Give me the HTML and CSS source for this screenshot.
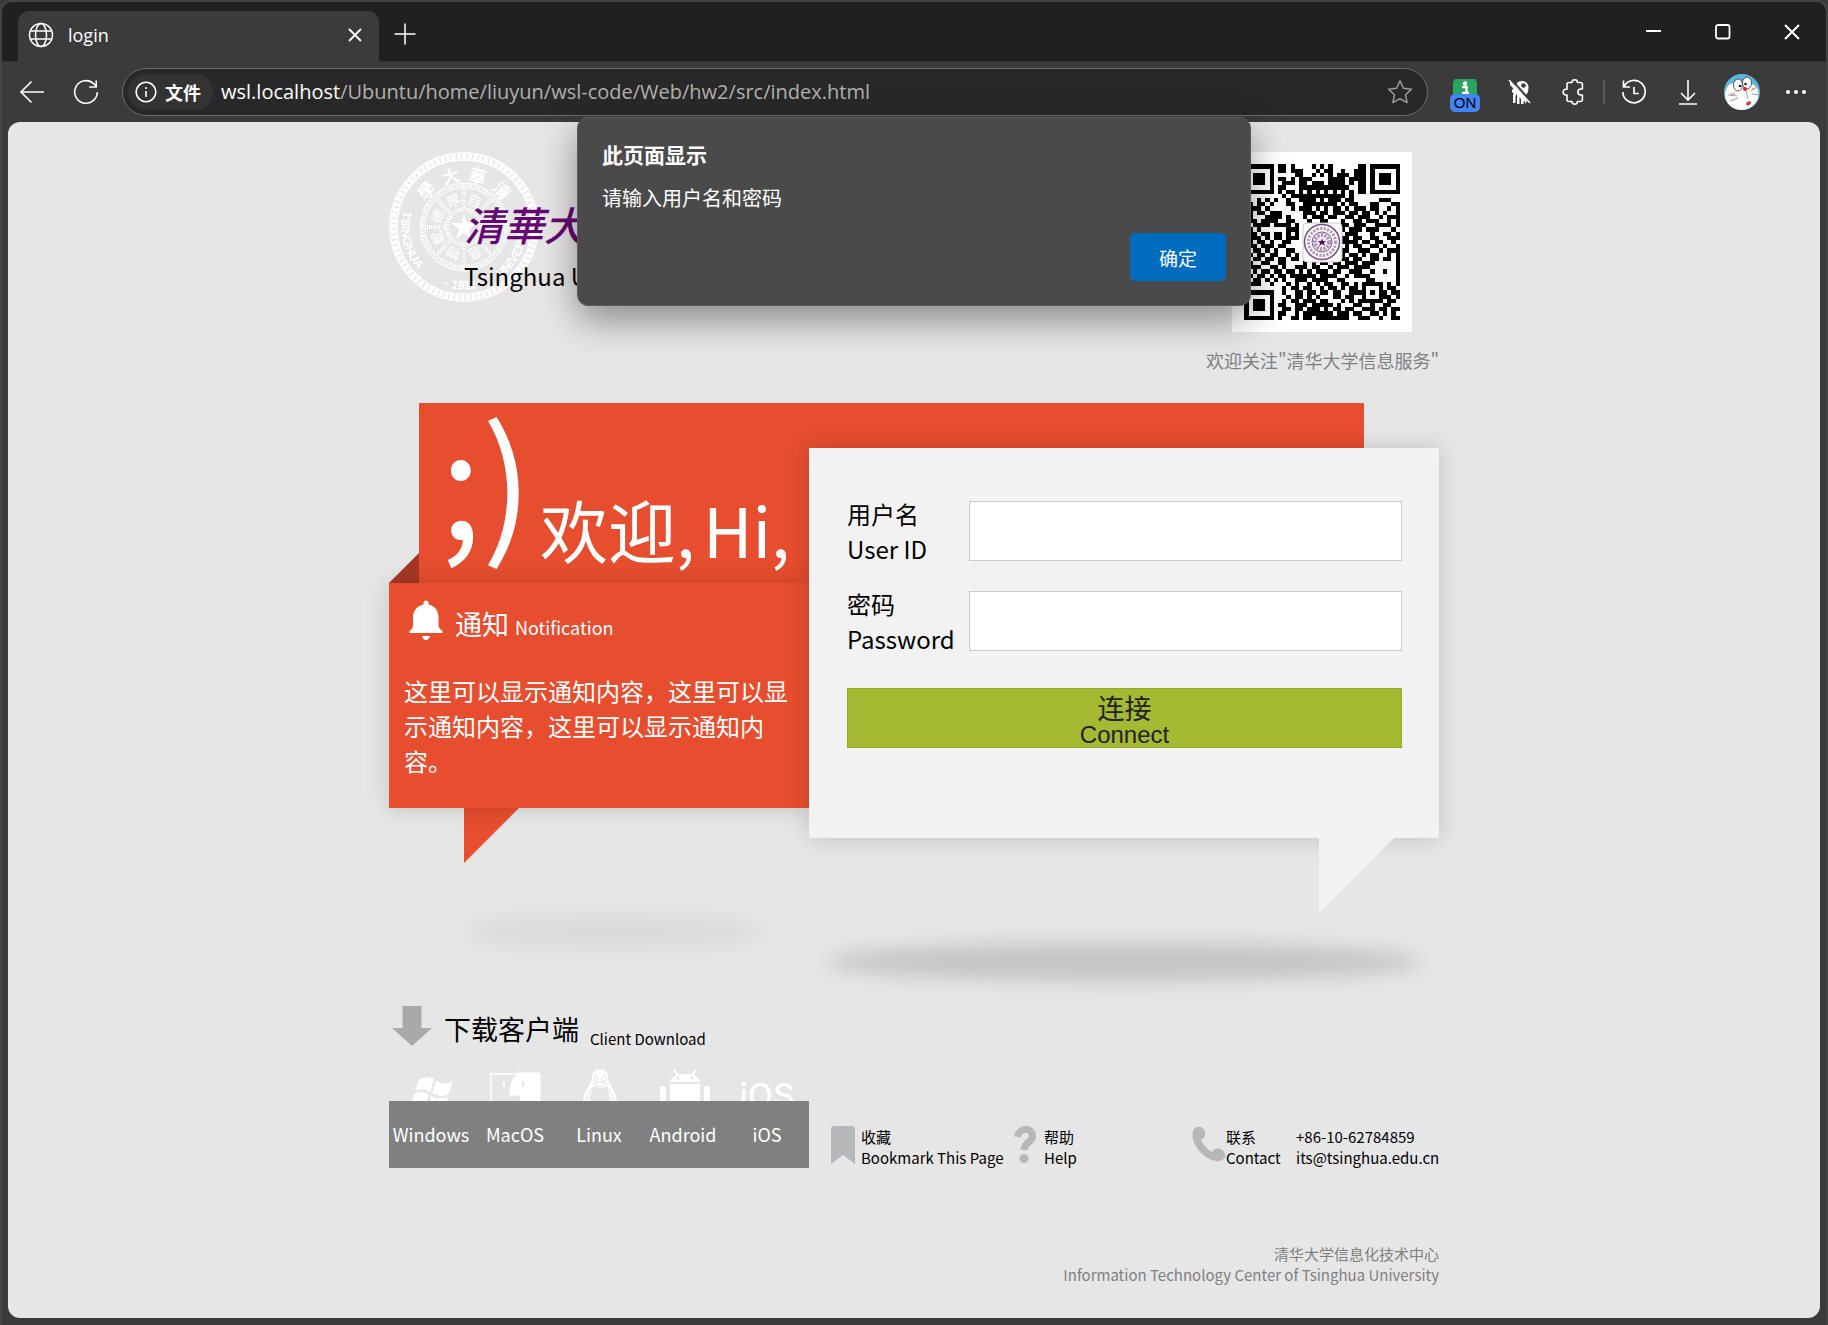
FILE: index.html
```html
<!DOCTYPE html>
<html lang="zh-CN">
<head>
<meta charset="utf-8">
<title>login</title>
<link rel="stylesheet" href="styles.css">
</head>
<body>
<div class="window">
  <header class="titlebar">
    <div class="tab">
      <svg class="tab-icon" width="26" height="26" viewBox="0 0 26 26"><g fill="none" stroke="#fff" stroke-width="1.5"><circle cx="13" cy="13" r="11.5"/><ellipse cx="13" cy="13" rx="5.5" ry="11.5"/><path d="M2.5 9h21M2.5 17h21"/></g></svg>
      <span class="tab-title">login</span>
      <button class="plain" aria-label="关闭标签页"><svg width="14" height="14" viewBox="0 0 14 14"><path d="M1 1l12 12M13 1L1 13" stroke="#fff" stroke-width="1.8" fill="none"/></svg></button>
    </div>
    <button class="plain new-tab" aria-label="新建标签页"><svg width="22" height="22" viewBox="0 0 22 22"><path d="M11 .5v21M.5 11h21" stroke="#fff" stroke-width="1.5" fill="none"/></svg></button>
    <div class="window-buttons">
      <button class="plain" aria-label="最小化"><svg width="16" height="16" viewBox="0 0 16 16"><path d="M0 7h15" stroke="#fff" stroke-width="2"/></svg></button>
      <button class="plain" aria-label="最大化"><svg width="16" height="16" viewBox="0 0 16 16"><rect x="1" y="1" width="13.5" height="13.5" rx="2" stroke="#fff" stroke-width="1.8" fill="none"/></svg></button>
      <button class="plain" aria-label="关闭"><svg width="16" height="16" viewBox="0 0 16 16"><path d="M1 1l14 14M15 1L1 15" stroke="#fff" stroke-width="2" fill="none"/></svg></button>
    </div>
  </header>

  <div class="toolbar">
    <button class="tool" aria-label="返回"><svg width="26" height="24" viewBox="0 0 26 24"><path d="M25 12H2M12.500 1.500L2 12l10.500 10.500" stroke="#fff" stroke-width="1.600" fill="none"/></svg></button>
    <button class="tool" aria-label="刷新"><svg width="26" height="26" viewBox="0 0 26 26"><path d="M24.300 13A11.300 11.300 0 1 1 20.800 4.800L23 7M23.200 1.500V8h-7" stroke="#fff" stroke-width="1.600" fill="none"/></svg></button>
    <div class="address">
      <span class="chip"><svg width="22" height="22" viewBox="0 0 22 22"><circle cx="11" cy="11" r="9.800" fill="none" stroke="#fff" stroke-width="1.600"/><path d="M11 10v6" stroke="#fff" stroke-width="1.600"/><circle cx="11" cy="7" r="1.100" fill="#fff"/></svg>文件</span>
      <span class="url"><b>wsl.localhost</b>/Ubuntu/home/liuyun/wsl-code/Web/hw2/src/index.html</span>
      <button class="plain" aria-label="收藏此页"><svg width="26" height="26" viewBox="0 0 26 26"><path d="M13 1.800l3.400 7.400 8 1-5.900 5.500 1.600 8L13 19.700l-7.100 4 1.600-8L1.600 10.200l8-1z" stroke="#a0a0a0" stroke-width="1.400" fill="none" stroke-linejoin="round"/></svg></button>
    </div>
    <button class="tool tool-on" aria-label="扩展"><svg width="30" height="34" viewBox="0 0 30 34"><path d="M5 0h20l2 3v12H3V3z" fill="#29a562"/><circle cx="15" cy="4.500" r="2.200" fill="#fff"/><path d="M12 8h4.500v6M12 14h7" stroke="#fff" stroke-width="2.500" fill="none"/><rect y="15" width="30" height="18" rx="5" fill="#4285f4"/><text x="15" y="29" text-anchor="middle" class="badge">ON</text></svg></button>
    <button class="tool" aria-label="扩展二"><svg width="24" height="24" viewBox="0 0 24 24"><path d="M2 1l5 5v4L2 5zM4 9l4 4v3L4 12zM5 14v9h2.500v-8zM9 15v9h2.500v-9zM13 17v7h2.500v-6zM17 19v5l2-3zM9 3c3-3 11-3 11.500 4 0 4-1 7-3 8L8 6z" fill="#fff"/><path d="M6 5l12 14-2 3L5 11z" fill="#fff"/><circle cx="15.500" cy="5.500" r="2.300" fill="#3b3b3b"/><path d="M4 0l19 21" stroke="#3b3b3b" stroke-width="1.500"/><path d="M1 0l21 23" stroke="#fff" stroke-width="1.500"/></svg></button>
    <button class="tool" aria-label="扩展中心"><svg width="24" height="26" viewBox="0 0 24 26"><path d="M7 3.500h3a2.700 2.700 0 0 1 5.400 0h3a2 2 0 0 1 2 2V10h-1.500a3 3 0 0 0 0 6h1.500v4.500a2 2 0 0 1-2 2h-3a2.700 2.700 0 0 1-5.400 0H7a2 2 0 0 1-2-2V16H4a2.900 2.900 0 0 1 0-5.800h1V5.500a2 2 0 0 1 2-2z" stroke="#fff" stroke-width="1.600" fill="none" stroke-linejoin="round"/></svg></button>
    <span class="divider"></span>
    <button class="tool" aria-label="历史记录"><svg width="26" height="26" viewBox="0 0 26 26"><path d="M2.500 1.500V8H9M3 7.500A11.200 11.200 0 1 1 1.800 13M13 8v6.500h5" stroke="#fff" stroke-width="1.700" fill="none"/></svg></button>
    <button class="tool" aria-label="下载"><svg width="20" height="26" viewBox="0 0 20 26"><path d="M10 1v20M3 14l7 7 7-7M1 25h18" stroke="#fff" stroke-width="1.600" fill="none"/></svg></button>
    <button class="tool" aria-label="个人资料"><svg width="36" height="36" viewBox="0 0 36 36"><circle cx="18" cy="18" r="18" fill="#5ab8e0"/><path d="M4 12c6-6 22-7 29 2 5 10-3 22-15 22C5 36-4 24 4 12z" fill="#fff"/><g stroke="#333" stroke-width=".8" fill="#fff"><ellipse cx="14" cy="11" rx="4.500" ry="6"/><ellipse cx="23" cy="9" rx="4.500" ry="6"/></g><circle cx="16" cy="12" r="1.300" fill="#222"/><circle cx="21.500" cy="10" r="1.300" fill="#222"/><circle cx="21" cy="15" r="2" fill="#d22"/><path d="M22 17l2 8M4 21l9 1M6 27l8-3M27 17l6-4M28 20l7 1" stroke="#777" stroke-width=".7"/><path d="M22 30c1-4 6-3 5-1s-4 4-5 1z" fill="#d33"/><path d="M6 20h5M28 15l4-1" stroke="#f69a9a" stroke-width="1.500"/></svg></button>
    <button class="tool" aria-label="更多"><svg width="20" height="4" viewBox="0 0 20 4"><g fill="#fff"><circle cx="2" cy="2" r="2"/><circle cx="10" cy="2" r="2"/><circle cx="18" cy="2" r="2"/></g></svg></button>
  </div>

  <div class="page">
    <main class="content">
      <div class="masthead">
        <div class="brand">
          <svg class="seal" width="150" height="150" viewBox="0 0 150 150">
            <defs>
              <path id="arc-low" d="M15 57A62.600 62.600 0 1 0 135 57"/>
            </defs>
            <g fill="none" stroke="#fff">
              <circle cx="75" cy="75" r="74" stroke-width="1.300"/>
              <circle cx="75" cy="75" r="67" stroke-width="1.300"/>
              <circle cx="75" cy="75" r="70.500" stroke-width="6" stroke-dasharray="4.200 1.300"/>
              <circle cx="75" cy="75" r="44" stroke-width="1"/>
              <circle cx="75" cy="75" r="41.500" stroke-width="3" stroke-dasharray="1.500 1.300"/>
              <circle cx="75" cy="75" r="39" stroke-width="1"/>
              <circle cx="75" cy="75" r="19" stroke-width="1"/>
              <circle cx="75" cy="75" r="16.500" stroke-width="3" stroke-dasharray="1.500 1.300"/>
              <path d="M75 36v20M75 94v20M36 75h20M94 75h20M47.400 47.400l14 14M88.500 88.500l14 14M102.600 47.400l-14 14M61.500 88.500l-14 14" stroke-width="4" stroke-dasharray="1 1"/>
            </g>
            <path d="M75 62l3 9h10l-8 6 3 10-8-6-8 6 3-10-8-6h10z" fill="#fff"/>
            <g class="seal-cjk" text-anchor="middle">
              <g transform="rotate(-46 75 75)"><text x="75" y="29">學</text></g>
              <g transform="rotate(-15 75 75)"><text x="75" y="29">大</text></g>
              <g transform="rotate(15 75 75)"><text x="75" y="29">華</text></g>
              <g transform="rotate(46 75 75)"><text x="75" y="29">清</text></g>
            </g>
            <g class="seal-motto" text-anchor="middle">
              <g transform="rotate(22 75 75)"><text x="75" y="52">自</text></g>
              <g transform="rotate(67 75 75)"><text x="75" y="52">強</text></g>
              <g transform="rotate(112 75 75)"><text x="75" y="52">不</text></g>
              <g transform="rotate(157 75 75)"><text x="75" y="52">息</text></g>
              <g transform="rotate(202 75 75)"><text x="75" y="52">物</text></g>
              <g transform="rotate(247 75 75)"><text x="75" y="52">載</text></g>
              <g transform="rotate(-67 75 75)"><text x="75" y="52">德</text></g>
              <g transform="rotate(-22 75 75)"><text x="75" y="52">厚</text></g>
            </g>
            <text class="seal-latin"><textPath href="#arc-low" startOffset="2">TSINGHUA</textPath></text>
            <text class="seal-latin"><textPath href="#arc-low" startOffset="93">– 1911 –</textPath></text>
            <text class="seal-latin"><textPath href="#arc-low" startOffset="154">UNIVERSITY</textPath></text>
          </svg>
          <div class="wordmark">
            <span class="wordmark-cn">清華大學</span>
            <span class="wordmark-en">Tsinghua University</span>
          </div>
        </div>
        <figure class="follow">
          <svg class="qr" id="qr" width="180" height="180" viewBox="0 0 180 180" shape-rendering="crispEdges">
            <rect width="180" height="180" fill="#fff"/>
            <path id="qr-modules"/>
            <rect x="71" y="71" width="39" height="39" rx="4" fill="#fff" stroke="#ccc" shape-rendering="auto"/>
            <g fill="none" stroke="#7d4b8b" shape-rendering="auto">
              <circle cx="90" cy="90" r="17.500" stroke-width="1.500"/>
              <circle cx="90" cy="90" r="13.500" stroke-width="3" stroke-dasharray="2.200 1.400" opacity=".6"/>
              <circle cx="90" cy="90" r="10"/>
              <circle cx="90" cy="90" r="7" stroke-width="4" stroke-dasharray="2.500 1" opacity=".6"/>
            </g>
            <path d="M90 86l1 3h3l-2 2 1 3-3-2-3 2 1-3-2-2h3z" fill="#660874" shape-rendering="auto"/>
          </svg>
          <figcaption>欢迎关注"清华大学信息服务"</figcaption>
        </figure>
      </div>

      <div class="stage">
        <div class="banner"><span class="smiley">;)</span><h1 class="welcome"><span>欢迎,</span><span>Hi,</span></h1></div>
        <section class="notice">
          <h2 class="notice-head">
            <svg width="34" height="40" viewBox="0 0 34 40"><path d="M14.500 4.500V3a2.500 2.500 0 0 1 5 0v1.500C27 6 29.500 12 29.500 17v8c0 3 2 4 4 6v2H.5v-2c2-2 3.500-3 3.500-6v-8C4 12 7 6 14.500 4.500zM13 36h8c-.3 2-2 4-4 4s-3.700-2-4-4z" fill="#fff"/></svg>
            <span class="notice-title">通知</span>
            <span class="notice-sub">Notification</span>
          </h2>
          <p>这里可以显示通知内容，这里可以显示通知内容，这里可以显示通知内容。</p>
        </section>
        <form class="login">
          <label for="user">用户名<br>User ID</label>
          <input id="user" type="text">
          <label for="pass">密码<br>Password</label>
          <input id="pass" type="password">
          <button class="connect" type="button"><span class="connect-cn">连接</span><span>Connect</span></button>
        </form>
      </div>

      <div class="services">
        <section class="downloads">
          <h2 class="downloads-head">
            <svg width="40" height="40" viewBox="0 0 40 40"><path d="M10.500 0h19v22H40L20 40 0 22h10.500z" fill="#a9a9a9"/></svg>
            <span class="downloads-title">下载客户端</span>
            <span class="downloads-sub">Client Download</span>
          </h2>
          <ul class="systems">
            <li><a href="#windows">
              <svg viewBox="0 0 84 34"><path d="M30 13c5-3 10-4 15-1l-4 13c-5-3-9-3-15-1zM47 14c5 3 10 3 17 0l-4 13c-6 3-11 2-17-1zM25 27c5-2 10-3 15 1l-2 6H23zM42 29c5 3 9 3 17 1l-1 4H41z" fill="#fff"/></svg>
              <span>Windows</span></a></li>
            <li><a href="#macos">
              <svg viewBox="0 0 84 34"><path d="M18 34V7h27" stroke="#fff" fill="none" stroke-width="1.500"/><path d="M45 6h22v28H48c-1-2-1-3 0-6H37c0-9 2-16 8-22zM47 3l-3 5" fill="#fff" stroke="#fff"/><path d="M31 14v6" stroke="#fff" stroke-width="2"/><path d="M50 14v6" stroke="#e5e5e5" stroke-width="2"/></svg>
              <span>MacOS</span></a></li>
            <li><a href="#linux">
              <svg viewBox="0 0 84 34"><path d="M43 2c6 0 8 4 8 9 0 6 9 14 9 23H53c0-6-2-12-4-15-3 3-8 3-11 0-3 3-5 9-5 15h-7c0-9 9-17 9-23 0-5 2-9 8-9z" fill="#fff"/><path d="M36 20c-3 5-6 9-6 14M50 20c3 5 6 9 6 14" stroke="#e6e6e6" fill="none"/><g fill="none" stroke="#e6e6e6"><ellipse cx="39" cy="12" rx="2" ry="3"/><ellipse cx="47" cy="12" rx="2.500" ry="3"/><path d="M37 17c4-2 8-2 12 0-4 4-8 4-12 0z"/></g></svg>
              <span>Linux</span></a></li>
            <li><a href="#android">
              <svg viewBox="0 0 84 34"><path d="M29 15c1-11 29-11 30 0z" fill="#fff"/><path d="M33 3l4 6M55 3l-4 6" stroke="#fff" stroke-width="2"/><path d="M29 17h30v17H29zM19 34V22a3 3 0 0 1 6 0v12zM63 34V22a3 3 0 0 1 6 0v12z" fill="#fff"/><circle cx="37" cy="11" r="1.500" fill="#e6e6e6"/><circle cx="51" cy="11" r="1.500" fill="#e6e6e6"/></svg>
              <span>Android</span></a></li>
            <li><a href="#ios">
              <svg viewBox="0 0 84 34"><text x="42" y="40" text-anchor="middle" class="ios-logo">iOS</text></svg>
              <span>iOS</span></a></li>
          </ul>
        </section>
        <nav class="links">
          <a class="bookmark" href="#bookmark">
            <svg width="26" height="38" viewBox="0 0 26 38"><path d="M3 0h18a3 3 0 0 1 3 3v35l-12-9-12 9V3a3 3 0 0 1 3-3z" fill="#b5b7b8"/></svg>
            <span>收藏<br>Bookmark This Page</span>
          </a>
          <a class="help" href="#help">
            <svg width="22" height="38" viewBox="0 0 22 38"><path d="M3.500 11C5 1 18 1 18.500 10c.3 6-8 6-8.500 14" stroke="#b5b7b8" stroke-width="7" fill="none"/><circle cx="10" cy="32.500" r="4.500" fill="#b5b7b8"/></svg>
            <span>帮助<br>Help</span>
          </a>
          <a class="contact" href="#contact">
            <svg width="34" height="36" viewBox="0 0 34 36"><path d="M2 3c4-4 10-2 11 3 1 4-1 7-4 8 3 6 7 10 11 12 3-5 10-4 12 0 3 4 0 8-4 9C14 37-5 16 2 3z" fill="#b5b7b8"/></svg>
            <span>联系<br>Contact</span>
          </a>
          <address>+86-10-62784859<br>its@tsinghua.edu.cn</address>
        </nav>
      </div>

      <footer class="copyright">清华大学信息化技术中心<br>Information Technology Center of Tsinghua University</footer>
    </main>
  </div>

  <div class="dialog" role="alertdialog" aria-labelledby="dialog-title">
    <h2 id="dialog-title">此页面显示</h2>
    <p>请输入用户名和密码</p>
    <button type="button">确定</button>
  </div>
</div>
<script src="qr.js"></script>
</body>
</html>
```
FILE: styles.css
```css
* { box-sizing: border-box; }
body {
  margin: 0;
  background: #3b3b3b;
  color: #000;
  font-family: "Noto Sans CJK SC", sans-serif;
}
h1, h2, p, ul, figure { margin: 0; padding: 0; font-weight: 400; }
svg { display: block; flex: none; }
a { color: inherit; text-decoration: none; }
button { font-family: inherit; cursor: pointer; }

.window {
  position: relative;
  display: flex;
  flex-direction: column;
  min-height: 100vh;
  border: 2px solid #444;
  border-bottom: 0;
  border-radius: 12px 12px 0 0;
  background: #3b3b3b;
}

/* Browser frame */
.plain, .tool {
  display: flex;
  align-items: center;
  justify-content: center;
  padding: 0;
  border: 0;
  background: none;
}
.titlebar {
  display: flex;
  height: 60px;
  padding: 9px 0 0 16px;
  border-bottom: 1px solid #333;
  border-radius: 10px 10px 0 0;
  background: #202020;
}
.tab {
  display: flex;
  align-items: center;
  width: 361px;
  height: 51px;
  padding: 0 17px 4px 10px;
  border-radius: 11px 11px 0 0;
  background: #3b3b3b;
  color: #fff;
}
.tab-title { flex: 1; padding-left: 14px; font: 18px/24px "Open Sans", sans-serif; }
.new-tab { width: 52px; height: 46px; }
.window-buttons { display: flex; margin-left: auto; }
.window-buttons button { width: 69px; height: 42px; }

.toolbar {
  display: flex;
  align-items: center;
  height: 60px;
  padding: 0 3px;
}
.tool { width: 54px; height: 48px; flex: none; }
.tool-on { padding: 8px 2px 0 0; }
.badge { font: 15px "Liberation Sans", sans-serif; }
.divider { width: 2px; height: 24px; margin: 0 2px; background: #5a5a5a; }
.address {
  display: flex;
  align-items: center;
  flex: 1;
  height: 48px;
  margin: 0 11px 0 9px;
  padding: 0 14px 0 5px;
  border: 1px solid #6b6b6b;
  border-radius: 24px;
  background: #282828;
}
.chip {
  display: flex;
  align-items: center;
  gap: 8px;
  height: 36px;
  padding: 0 12px 0 7px;
  border-radius: 18px;
  background: #333;
  color: #fff;
  font-size: 18px;
  font-weight: 700;
}
.url { flex: 1; padding-left: 8px; color: #b0b0b0; font: 20px/28px "Open Sans", sans-serif; }
.url b { color: #fff; font-weight: 400; }

/* Page viewport */
.page {
  flex: 1;
  margin: 0 6px 7px;
  padding: 30px 0;
  border-radius: 12px;
  background: #e6e6e6;
}
.content { max-width: 1050px; margin: 0 auto; }

.masthead { display: flex; justify-content: space-between; height: 251px; }
.brand { display: grid; grid-template-columns: 75px auto; align-items: start; }
.seal { grid-column: 1 / 3; grid-row: 1; }
.seal text { fill: #fff; }
.seal-cjk { font-size: 17px; font-weight: 700; }
.seal-motto { font-size: 14px; }
.seal-latin { font: bold 12px "Liberation Sans", sans-serif; }
.wordmark { display: flex; flex-direction: column; grid-column: 2; grid-row: 1; padding-top: 38px; }
.wordmark-cn { color: #660874; font-size: 40px; font-weight: 500; font-style: italic; line-height: 68px; }
.wordmark-en { font-size: 24px; line-height: 35px; }
.follow { display: flex; flex-direction: column; align-items: center; }
.follow figcaption { margin-top: 15px; color: #808080; font-size: 18px; line-height: 26px; }

/* Overlapping banner, notice and login card */
.stage {
  position: relative;
  isolation: isolate;
  display: grid;
  grid-template-columns: 30px 390px 1fr 75px;
  grid-template-rows: 45px 135px 225px 30px;
}
.stage::before, .stage::after {
  content: "";
  position: absolute;
  border-radius: 50%;
  z-index: -1;
}
.stage::before {
  left: 75px; top: 512px; width: 300px; height: 34px;
  background: rgba(0, 0, 0, .05);
  filter: blur(10px);
}
.stage::after {
  left: 437px; top: 540px; width: 596px; height: 38px;
  background: rgba(0, 0, 0, .15);
  filter: blur(10px);
}
.banner {
  display: flex;
  align-items: flex-end;
  grid-column: 2 / 4;
  grid-row: 1 / 3;
  padding: 0 0 20px 21px;
  background: #e74e2f;
  color: #fff;
}
.smiley { width: 100px; margin-bottom: 13px; font-size: 150px; line-height: 150px; }
.welcome { display: flex; gap: 8px; font-size: 68px; line-height: 68px; white-space: nowrap; }
.notice {
  position: relative;
  grid-column: 1 / 3;
  grid-row: 3;
  padding: 17px 15px 0;
  background: #e74e2f;
  box-shadow: 0 0 22px rgba(0, 0, 0, .17);
  color: #fff;
}
.notice::before, .notice::after, .login::after {
  content: "";
  position: absolute;
}
.notice::before {
  z-index: -1;
  left: 0; top: -30px; width: 30px; height: 30px;
  background: #a53825;
  clip-path: polygon(100% 0, 100% 100%, 0 100%);
}
.notice::after {
  z-index: -1;
  left: 75px; top: 100%; width: 55px; height: 55px;
  background: #e74e2f;
  clip-path: polygon(0 0, 100% 0, 0 100%);
}
.notice-head { display: flex; align-items: baseline; height: 73px; padding-left: 5px; }
.notice-head svg { align-self: flex-start; }
.notice-title { padding-left: 12px; font-size: 27px; line-height: 48px; }
.notice-sub { padding-left: 6px; font-size: 18px; }
.notice p { font-size: 24px; line-height: 35px; }

.login {
  position: relative;
  display: grid;
  grid-template-columns: 122px 1fr;
  grid-auto-rows: 60px;
  row-gap: 30px;
  grid-column: 3 / 5;
  grid-row: 2 / 5;
  padding: 53px 37px 0 38px;
  background: #f2f2f2;
  box-shadow: 0 0 22px rgba(0, 0, 0, .17);
}
.login::after {
  right: 45px; top: 100%; width: 75px; height: 75px;
  background: #f2f2f2;
  clip-path: polygon(0 0, 100% 0, 0 100%);
}
.login label { align-self: center; font-size: 24px; line-height: 35px; }
.login input { width: 100%; height: 60px; padding: 0 12px; border: 1px solid #ccc; background: #fff; font-size: 24px; }
.connect {
  display: flex;
  flex-direction: column;
  align-items: center;
  justify-content: flex-end;
  grid-column: 1 / 3;
  margin-top: 7px;
  height: 60px;
  padding: 0;
  border: 1px solid #95ab22;
  background: #a5b933;
  color: #222;
  font: 24px/24px "Liberation Sans", "Noto Sans CJK SC", sans-serif;
}
.connect-cn { font-size: 27px; line-height: 26px; }

/* Downloads and service links */
.services { display: grid; grid-template-columns: 420px 1fr; align-items: end; margin-top: 168px; }
.downloads-head { display: flex; align-items: flex-start; height: 61px; padding-left: 3px; }
.downloads-title { padding-left: 12px; font-size: 27px; line-height: 46px; }
.downloads-sub { padding: 22px 0 0 11px; font-size: 15px; line-height: 21px; }
.systems { display: grid; grid-template-columns: repeat(5, 1fr); list-style: none; }
.systems svg { width: 100%; height: 34px; }
.systems span { display: block; background: #808080; color: #fff; font-size: 18px; line-height: 67px; text-align: center; }
.ios-logo { fill: #fff; font: 500 33px Inter, sans-serif; }
.links {
  display: grid;
  grid-template-columns: 183px 178px 104px 1fr;
  padding-left: 22px;
  font-size: 15px;
  line-height: 21px;
}
.links a { display: flex; }
.bookmark { gap: 4px; }
.help { gap: 8px; }
.links address { font-style: normal; text-align: left; white-space: nowrap; }
.copyright { margin-top: 75px; color: #808080; font-size: 15px; line-height: 21px; text-align: right; }

/* Alert over the page */
.dialog {
  position: absolute;
  top: 115px;
  left: 50%;
  display: flex;
  flex-direction: column;
  width: 674px;
  margin-left: -337px;
  padding: 20px 24px;
  padding-bottom: 24px;
  border: 1px solid #5c5c5c;
  border-radius: 11px;
  background: #4a4a4a;
  box-shadow: 0 14px 36px rgba(0, 0, 0, .4);
  color: #fff;
}
.dialog h2 { font-size: 21px; font-weight: 700; line-height: 32px; }
.dialog p { margin: 12px 0 19px; font-size: 20px; line-height: 32px; }
.dialog button {
  align-self: flex-end;
  width: 96px;
  height: 48px;
  border: 0;
  border-radius: 5px;
  background: #006cbe;
  color: #fff;
  font-size: 19px;
}
```
FILE: qr.js
```js
const rows = [
  "1111111011010000101010000001101111111",
  "1000001011011100010110010011101000001",
  "1011101000001100101010111011101011101",
  "1011101011010111000011110111101011101",
  "1011101001110110111011110101101011101",
  "1000001011000111111111111001101000001",
  "1111111010110101010101010101101111111",
  "0000000001011111111111110100000000000",
  "0001010100100111101011101100000011100",
  "1101101000110011111111010110001100011",
  "1111010000010111010101101011101100101",
  "0101101110000011101101110110110101001",
  "1100011110100010111011001101110010111",
  "0110111100110001001100010011011100101",
  "1011110111101000000000011011100111101",
  "1101000000111000000000010111011100010",
  "1110110110101000000000001110001001101",
  "0111010110111000000000011011001100111",
  "1101101001100000000000011110110110010",
  "0110111011000000000000001011001101001",
  "1011010100110000000000011001110010111",
  "1101101100101000000000010110101100101",
  "0011011011011000000000011011001101101",
  "1100110011000010101101101110111000001",
  "0111001101001110110010111011110000001",
  "1010110110110101011101100111001001001",
  "1101101011011111101111001011110000001",
  "1011010101001110111100110000011000001",
  "0111001000101001010110011010111110101",
  "0000000001011011001011010110100010110",
  "1111111001001101101101100111101011011",
  "1000001000101101010001101100100011101",
  "1011101001011011101100010101111110110",
  "1011101011001110111110100011001001100",
  "1011101001101101110101101100111011011",
  "1000001011001011111110111011001101010",
  "1111111010011011011111111001110010011"
];
const pitch = 4.2;
let d = "";
rows.forEach((row, y) => {
  for (const run of row.matchAll(/1+/g)) {
    d += `M${12.3 + run.index * pitch} ${12.3 + y * pitch}h${run[0].length * pitch}v${pitch}h${-run[0].length * pitch}z`;
  }
});
document.getElementById("qr-modules").setAttribute("d", d);
```
